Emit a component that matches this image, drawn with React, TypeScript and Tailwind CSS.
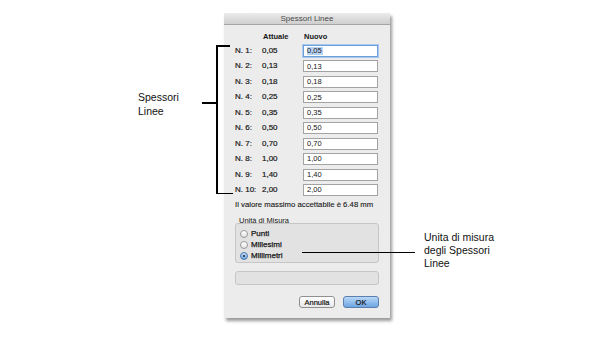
import React from 'react'

const rows = [
  { n: 'N. 1:', v: '0,05' },
  { n: 'N. 2:', v: '0,13' },
  { n: 'N. 3:', v: '0,18' },
  { n: 'N. 4:', v: '0,25' },
  { n: 'N. 5:', v: '0,35' },
  { n: 'N. 6:', v: '0,50' },
  { n: 'N. 7:', v: '0,70' },
  { n: 'N. 8:', v: '1,00' },
  { n: 'N. 9:', v: '1,40' },
  { n: 'N. 10:', v: '2,00' },
]

const units = [
  { label: 'Punti', checked: false },
  { label: 'Millesimi', checked: false },
  { label: 'Millimetri', checked: true },
]

function Radio({ checked }: { checked: boolean }) {
  if (checked) {
    return (
      <span className="w-[8px] h-[8px] rounded-full border border-[#4b78b4] bg-gradient-to-b from-[#c4dcf5] to-[#6fa5e0] flex items-center justify-center">
        <span className="w-[2.5px] h-[2.5px] rounded-full bg-[#1b2a40]" />
      </span>
    )
  }
  return <span className="w-[8px] h-[8px] rounded-full border border-[#9a9a9a] bg-gradient-to-b from-[#ffffff] to-[#e2e2e2]" />
}

export default function App() {
  return (
    <div className="relative w-[608px] h-[341px] bg-white overflow-hidden" style={{ fontFamily: '"Liberation Sans", Arial, sans-serif' }}>
      {/* dialog */}
      <div className="ml-[224px] pt-[13px]">
        <div className="w-[166px] h-[305px] bg-[#ececec] shadow-[2px_3px_3px_rgba(0,0,0,0.4)] flex flex-col">
          <div className="h-[12px] bg-gradient-to-b from-[#ebebeb] to-[#cfcfcf] border-b border-[#a5a5a5] flex items-center justify-center text-[8px] text-[#4a4a4a] leading-none">
            Spessori Linee
          </div>

          <div className="px-[11px] flex flex-col text-[#161616]">
            <div className="h-[12px] mt-[6px] flex items-center text-[7.5px] font-bold leading-none">
              <span className="w-[26px]" />
              <span className="w-[42px] pl-[2px]">Attuale</span>
              <span className="pl-[1px]">Nuovo</span>
            </div>

            <div className="mt-[2px] flex flex-col">
              {rows.map((r, i) => (
                <div key={r.n} className="h-[15.45px] flex items-start">
                  <div className="h-[12px] flex items-center text-[8px] leading-none w-[27px] [-webkit-text-stroke:0.2px_#161616]">{r.n}</div>
                  <div className="h-[12px] flex items-center text-[8px] leading-none w-[41px] [-webkit-text-stroke:0.2px_#161616]">{r.v}</div>
                  <div
                    className={`w-[75px] h-[12px] bg-white flex items-center pl-[3px] text-[7.5px] leading-none ${
                      i === 0 ? 'border border-[#6e9fdd] shadow-[0_0_0_1px_#a9c9ee]' : 'border border-[#a3a3a3]'
                    }`}
                  >
                    {i === 0 ? <span className="bg-[#b6d2f4] pr-[1px]">{r.v}</span> : r.v}
                  </div>
                </div>
              ))}
            </div>

            <div className="h-[10px] flex items-center text-[7.75px] leading-none [-webkit-text-stroke:0.1px_#161616]">Il valore massimo accettabile è 6.48 mm</div>

            <div className="mt-[6px] h-[10px] pl-[4px] flex items-center text-[7.5px] leading-none">Unità di Misura</div>

            <div className="mt-[-2px] h-[40px] rounded-[3px] border border-[#c6c6c6] bg-[#e2e2e2] pt-[4px] pl-[4px] flex flex-col">
              {units.map((u) => (
                <div key={u.label} className="h-[11px] flex items-center gap-[3px]">
                  <Radio checked={u.checked} />
                  <span className="text-[8px] leading-none [-webkit-text-stroke:0.25px_#161616]">{u.label}</span>
                </div>
              ))}
            </div>

            <div className="mt-[8px] h-[14px] rounded-[3px] border border-[#c6c6c6] bg-[#e2e2e2]" />

            <div className="mt-[11px] flex justify-end gap-[8px]">
              <div className="w-[36px] h-[12px] rounded-[3px] border border-[#8f8f8f] bg-gradient-to-b from-[#ffffff] to-[#e8e8e8] flex items-center justify-center text-[7.5px] leading-none [-webkit-text-stroke:0.2px_#161616]">
                Annulla
              </div>
              <div className="w-[36px] h-[12px] rounded-[3px] border border-[#5b7fb1] bg-gradient-to-b from-[#b9d8f6] to-[#6ca5e3] flex items-center justify-center text-[7.5px] leading-none [-webkit-text-stroke:0.2px_#161616]">
                OK
              </div>
            </div>
          </div>
        </div>
      </div>

      {/* left callout */}
      <div className="absolute left-[216px] top-[45px] w-[1.5px] h-[149px] bg-black" />
      <div className="absolute left-[216px] top-[45px] w-[14px] h-[1.5px] bg-black" />
      <div className="absolute left-[216px] top-[192.5px] w-[17px] h-[1.5px] bg-black" />
      <div className="absolute left-[202px] top-[102px] w-[15px] h-[1.5px] bg-black" />
      <div className="absolute left-[138px] top-[90px] text-[10.5px] leading-[14px] text-[#111]">
        Spessori
        <br />
        Linee
      </div>

      {/* right callout */}
      <div className="absolute left-[302px] top-[251.5px] w-[113px] h-[1.5px] bg-black" />
      <div className="absolute left-[424px] top-[230.5px] text-[10.5px] leading-[13px] text-[#111]">
        Unita di misura
        <br />
        degli Spessori
        <br />
        Linee
      </div>
    </div>
  )
}
